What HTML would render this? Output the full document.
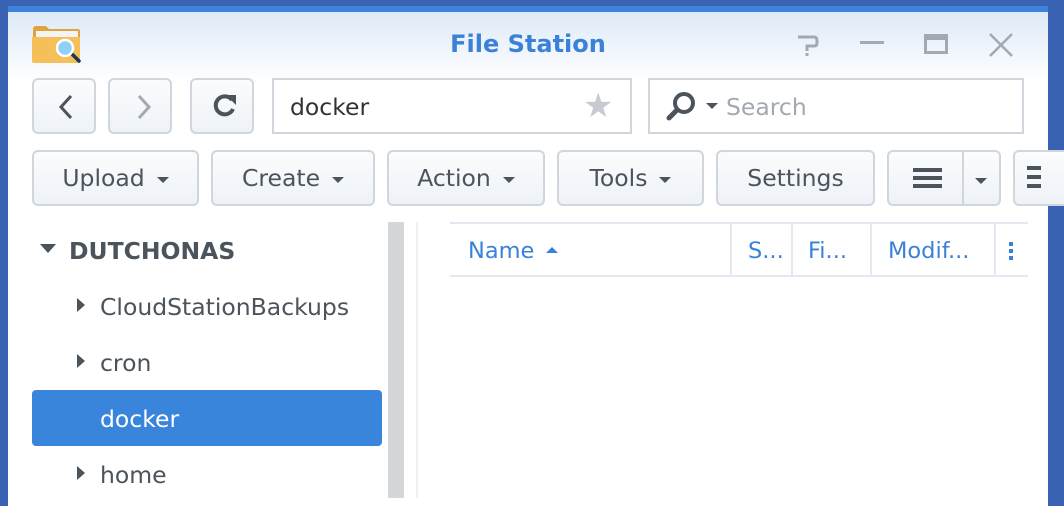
<!DOCTYPE html>
<html><head><style>
*{margin:0;padding:0;box-sizing:border-box}
body{width:1064px;height:498px;overflow:hidden;background:#3a62b3;font-family:"DejaVu Sans","Liberation Sans",sans-serif;position:relative}
.win{position:absolute;left:8px;top:6px;width:1040px;height:500px;background:#fff;border-top:6px solid #3b83dc;overflow:hidden}
.hdr{position:absolute;left:0;top:0;width:100%;height:70px;background:linear-gradient(#dde9f7,#fff)}
.abs{position:absolute}
.btn{position:absolute;border:2px solid #cfd6de;border-radius:6px;background:linear-gradient(#fbfcfd,#eef2f7);color:#4b535c;font-size:23.5px;text-align:center}
.caret{display:inline-block;width:0;height:0;border-left:6px solid transparent;border-right:6px solid transparent;border-top:6px solid #4b535c;vertical-align:middle;margin-left:12px}
.tb{top:150px;height:56px;line-height:53px}
.inp{position:absolute;border:2px solid #cfd6de;background:#fff}
.tree{position:absolute;font-size:23.5px;color:#4b535c}
.tri{position:absolute;width:0;height:0;border-top:7px solid transparent;border-bottom:7px solid transparent;border-left:8px solid #4b535c}
.col{position:absolute;top:238px;color:#3a82d8;font-size:22.5px}
</style></head><body>
<div class="win">
<div class="hdr"></div>
</div>
<svg class="abs" style="left:32px;top:24px" width="50" height="42" viewBox="0 0 50 42">
<path d="M1 6 Q1 2 4 2 L14 2 L17 5 L46 5 Q48 5 48 8 L48 38 L1 38Z" fill="#e0a43a"/>
<rect x="4" y="7" width="42" height="8" fill="#f4f4f4"/>
<path d="M0 13 L48 13 L48 38 Q48 39 46 39 L2 39 Q0 39 0 37Z" fill="#f5c05a"/>
<line x1="40" y1="30" x2="47" y2="37" stroke="#1b3550" stroke-width="3.5" stroke-linecap="round"/>
<circle cx="33" cy="24" r="8" fill="#8fd0f7" stroke="#fff" stroke-width="2.5"/>
</svg>
<div class="abs" style="left:0;width:1056px;top:30px;text-align:center;font-size:24px;font-weight:bold;color:#3a82d8">File Station</div>
<svg class="abs" style="left:796px;top:34px" width="24" height="24"><path d="M2 3L18 3Q21 3 21 7L21 9Q21 12 18 12L11 12L11 17" stroke="#a3a9b0" stroke-width="3" fill="none"/><rect x="9.5" y="19" width="3" height="3" fill="#a3a9b0"/></svg>
<div class="abs" style="left:860px;top:41px;width:24px;height:3px;background:#a3a9b0"></div>
<div class="abs" style="left:924px;top:34px;width:24px;height:20px;border:3px solid #a3a9b0;border-top-width:6px"></div>
<svg class="abs" style="left:988px;top:33px" width="26" height="24"><path d="M2 1L24 23M24 1L2 23" stroke="#a3a9b0" stroke-width="2.5"/></svg>
<div class="btn" style="left:32px;top:78px;width:64px;height:56px"></div>
<svg class="abs" style="left:58px;top:94px" width="16" height="26"><path d="M13 2L3 13L13 24" stroke="#4b535c" stroke-width="3" fill="none"/></svg>
<div class="btn" style="left:108px;top:78px;width:64px;height:56px"></div>
<svg class="abs" style="left:136px;top:94px" width="16" height="26"><path d="M3 2L13 13L3 24" stroke="#a3a9b0" stroke-width="3" fill="none"/></svg>
<div class="btn" style="left:190px;top:78px;width:64px;height:56px"></div>
<svg class="abs" style="left:212px;top:92px" width="26" height="26"><path d="M20 8A9 9 0 1 0 21 17" stroke="#4b535c" stroke-width="4" fill="none"/><path d="M14 3L24 3L24 13Z" fill="#4b535c"/></svg>
<div class="inp" style="left:272px;top:78px;width:360px;height:56px"></div>
<div class="abs" style="left:290px;top:93px;font-size:23.5px;color:#333">docker</div>
<div class="abs" style="left:583px;top:86px;font-size:34px;color:#c6cbd1">★</div>
<div class="inp" style="left:648px;top:78px;width:376px;height:56px"></div>
<svg class="abs" style="left:666px;top:90px" width="34" height="32"><circle cx="18" cy="13" r="9" stroke="#4b535c" stroke-width="4" fill="none"/><line x1="11" y1="20" x2="3" y2="28" stroke="#4b535c" stroke-width="5" stroke-linecap="round"/></svg>
<div class="abs" style="left:706px;top:103px;width:0;height:0;border-left:6px solid transparent;border-right:6px solid transparent;border-top:6px solid #4b535c"></div>
<div class="abs" style="left:726px;top:93px;font-size:23.5px;color:#a3a9b0">Search</div>
<div class="btn tb" style="left:32px;width:167px">Upload<span class="caret"></span></div>
<div class="btn tb" style="left:211px;width:164px">Create<span class="caret"></span></div>
<div class="btn tb" style="left:387px;width:158px">Action<span class="caret"></span></div>
<div class="btn tb" style="left:557px;width:147px">Tools<span class="caret"></span></div>
<div class="btn tb" style="left:716px;width:159px">Settings</div>
<div class="btn tb" style="left:887px;width:114px"></div>
<div class="abs" style="left:962px;top:152px;width:2px;height:52px;background:#cfd6de"></div>
<div class="abs" style="left:913px;top:176px;width:29px;height:4px;background:#4b535c;box-shadow:0 -8px 0 #4b535c,0 8px 0 #4b535c"></div>
<div class="abs" style="left:975px;top:178px;width:0;height:0;border-left:6px solid transparent;border-right:6px solid transparent;border-top:6px solid #4b535c"></div>
<div class="btn tb" style="left:1013px;width:60px"></div>
<div class="abs" style="left:1027px;top:166px;width:14px;height:4px;background:#4b535c;box-shadow:0 9px 0 #4b535c,0 18px 0 #4b535c"></div>
<div class="abs" style="left:40px;top:244px;width:0;height:0;border-left:8px solid transparent;border-right:8px solid transparent;border-top:9px solid #4b535c"></div>
<div class="tree" style="left:69px;top:237px;font-weight:bold">DUTCHONAS</div>
<div class="tri" style="left:77px;top:298px"></div>
<div class="tree" style="left:100px;top:293px">CloudStationBackups</div>
<div class="tri" style="left:77px;top:354px"></div>
<div class="tree" style="left:100px;top:349px">cron</div>
<div class="abs" style="left:32px;top:390px;width:350px;height:56px;background:#3a85dc;border-radius:4px"></div>
<div class="tree" style="left:100px;top:405px;color:#fff">docker</div>
<div class="tri" style="left:77px;top:466px"></div>
<div class="tree" style="left:100px;top:461px">home</div>
<div class="abs" style="left:388px;top:222px;width:16px;height:276px;background:#d4d6d9"></div>
<div class="abs" style="left:416px;top:222px;width:2px;height:276px;background:#eef0f2"></div>
<div class="abs" style="left:450px;top:222px;width:578px;height:2px;background:#e3e9f0"></div>
<div class="abs" style="left:450px;top:275px;width:578px;height:2px;background:#e3e9f0"></div>
<div class="abs" style="left:730px;top:224px;width:2px;height:51px;background:#e3e9f0"></div>
<div class="abs" style="left:791px;top:224px;width:2px;height:51px;background:#e3e9f0"></div>
<div class="abs" style="left:870px;top:224px;width:2px;height:51px;background:#e3e9f0"></div>
<div class="abs" style="left:994px;top:224px;width:2px;height:51px;background:#e3e9f0"></div>
<div class="col" style="left:468px">Name</div>
<div class="abs" style="left:546px;top:247px;width:0;height:0;border-left:6px solid transparent;border-right:6px solid transparent;border-bottom:6px solid #3a82d8"></div>
<div class="col" style="left:748px">S...</div>
<div class="col" style="left:808px">Fi...</div>
<div class="col" style="left:888px">Modif...</div>
<div class="abs" style="left:1009px;top:242px;width:4px;height:4px;background:#3a82d8;box-shadow:0 7px 0 #3a82d8,0 14px 0 #3a82d8"></div>
</body></html>
